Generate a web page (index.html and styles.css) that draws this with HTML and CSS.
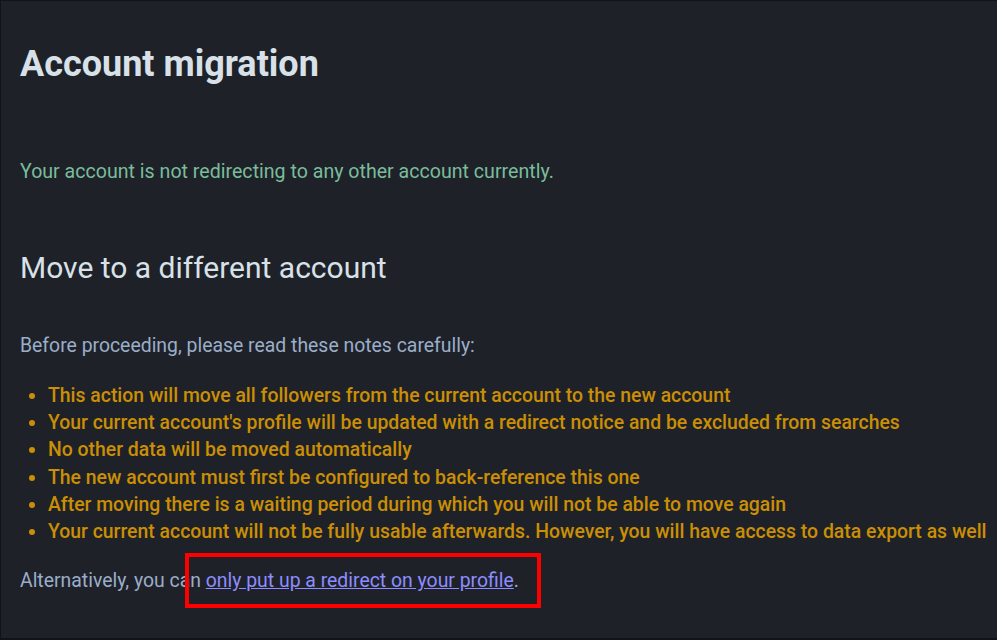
FILE: index.html
```html
<!DOCTYPE html>
<html>
<head>
<meta charset="utf-8">
<link rel="stylesheet" href="styles.css">
</head>
<body>
<main class="page">
  <h1 class="title">Account migration</h1>
  <p class="status">Your account is not redirecting to any other account currently.</p>
  <h2 class="subtitle">Move to a different account</h2>
  <p class="muted">Before proceeding, please read these notes carefully:</p>
  <ul class="notes">
    <li>This action will move all followers from the current account to the new account</li>
    <li>Your current account's profile will be updated with a redirect notice and be excluded from searches</li>
    <li>No other data will be moved automatically</li>
    <li>The new account must first be configured to back-reference this one</li>
    <li>After moving there is a waiting period during which you will not be able to move again</li>
    <li>Your current account will not be fully usable afterwards. However, you will have access to data export as well</li>
  </ul>
  <p class="muted alt">Alternatively, you can <a href="#" class="link">only put up a redirect on your profile</a>.</p>
  <div class="highlight"></div>
</main>
</body>
</html>
```

FILE: styles.css
```css
html, body {
  margin: 0;
  padding: 0;
  height: 100%;
}
body {
  background: #1f2129;
  font-family: Roboto, "Liberation Sans", sans-serif;
  overflow: hidden;
}
.page {
  position: relative;
  box-sizing: border-box;
  height: 640px;
  padding: 40px 0 0 19px;
  border-left: 1px solid #121319;
  border-top: 1px solid #121319;
  border-bottom: 2px solid #121319;
}
.title {
  margin: 0;
  font-size: 36px;
  font-weight: 700;
  line-height: 46px;
  color: #d9e1e8;
}
.status {
  margin: 71px 0 0;
  font-size: 19.6px;
  line-height: 27px;
  color: #79bd9a;
}
.subtitle {
  margin: 63px 0 0;
  font-size: 30px;
  font-weight: 400;
  line-height: 40px;
  color: #d9e1e8;
}
.muted {
  margin: 0;
  font-size: 19.4px;
  line-height: 27px;
  color: #9baec8;
}
.subtitle + .muted {
  margin-top: 44px;
}
.notes {
  margin: 23px 0 0;
  padding: 0 0 0 28px;
  font-size: 19.4px;
  line-height: 27.2px;
  font-weight: 500;
  color: #ca8f04;
  white-space: nowrap;
}
.notes li::marker {
  color: #ca8f04;
}
.alt {
  margin-top: 22px;
}
.link {
  color: #8c8dff;
  text-decoration: underline;
}
.highlight {
  position: absolute;
  left: 184px;
  top: 552px;
  width: 348px;
  height: 47px;
  border: 4px solid #f00;
}
```
